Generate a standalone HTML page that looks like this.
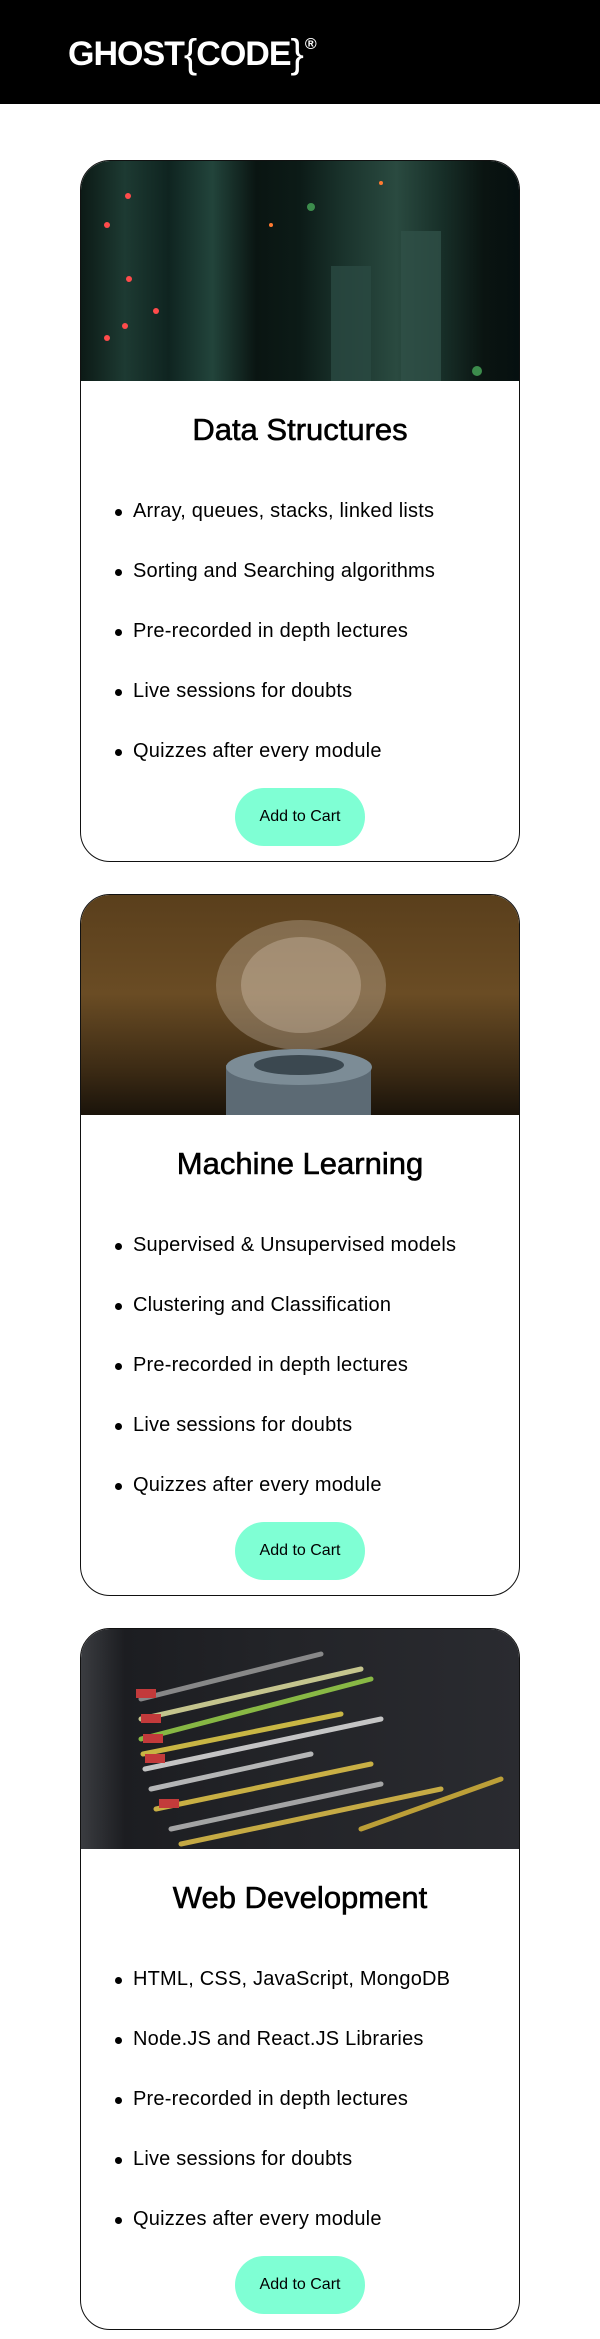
<!DOCTYPE html>
<html><head><meta charset="utf-8"><style>
*{margin:0;padding:0;box-sizing:border-box}
body{width:600px;height:2339px;background:#fff;font-family:"Liberation Sans",sans-serif;position:relative;overflow:hidden}
.hdr{position:absolute;left:0;top:0;width:600px;height:104px;background:#000}
.logo{position:absolute;left:68px;top:30px;color:#fff;font-size:34px;letter-spacing:-1px;font-weight:bold}
.logo .b{font-weight:normal;font-size:40px;position:relative;top:2px}
.logo sup{font-size:16px;vertical-align:top;position:relative;top:6px;margin-left:2px}
.card{position:absolute;left:80px;width:440px;height:702px;border:1.5px solid #111;border-radius:30px;overflow:hidden;background:#fff}
.img{position:absolute;left:0;top:0;width:100%;height:220px;overflow:hidden}
.card h2{position:absolute;top:251px;left:0;width:100%;text-align:center;font-weight:normal;font-size:31px;color:#000;-webkit-text-stroke:0.6px #000}
.card ul{position:absolute;left:52px;top:339px;list-style:none}
.card li{font-size:20px;height:60px;color:#000;position:relative;letter-spacing:0.2px}
.card li:before{content:"";position:absolute;left:-18px;top:9px;width:7px;height:7px;border-radius:50%;background:#000}
.btn{position:absolute;left:154px;top:627px;width:130px;height:58px;border-radius:29px;background:#7fffd4;text-align:center;line-height:58px;font-size:16px;color:#000}
</style></head><body>
<div class="hdr"><div class="logo">GHOST<span class="b">{</span>CODE<span class="b">}</span><sup>®</sup></div></div>

<div class="card" style="top:160px">
<div class="img" style="background:linear-gradient(90deg,#0c1a16 0%,#1d3a32 10%,#0f2420 20%,#22443b 30%,#0a1512 40%,#0c1b17 50%,#1a332c 60%,#2a4a40 72%,#183029 82%,#0a1411 92%,#061010 100%)">
<svg width="440" height="220" style="position:absolute;left:0;top:0">
<g fill="#ff4b4b"><circle cx="26" cy="64" r="3"/><circle cx="47" cy="35" r="3"/><circle cx="75" cy="150" r="3"/><circle cx="48" cy="118" r="3"/><circle cx="26" cy="177" r="3"/><circle cx="44" cy="165" r="3"/></g>
<g fill="#3c8c4c"><circle cx="230" cy="46" r="4"/><circle cx="396" cy="210" r="5"/></g>
<g fill="#ff7a30"><circle cx="190" cy="64" r="2"/><circle cx="300" cy="22" r="2"/></g>
<rect x="250" y="105" width="40" height="115" fill="#2b4a42" opacity=".8"/>
<rect x="320" y="70" width="40" height="150" fill="#2f5047" opacity=".8"/>
</svg></div>
<h2>Data Structures</h2>
<ul><li>Array, queues, stacks, linked lists</li><li>Sorting and Searching algorithms</li><li>Pre-recorded in depth lectures</li><li>Live sessions for doubts</li><li>Quizzes after every module</li></ul>
<div class="btn">Add to Cart</div>
</div>

<div class="card" style="top:894px">
<div class="img" style="background:linear-gradient(180deg,#5a3f1c 0%,#6a4c24 45%,#3b2a14 80%,#1a130a 100%)">
<svg width="440" height="220" style="position:absolute;left:0;top:0">
<ellipse cx="220" cy="90" rx="85" ry="65" fill="#c9b9a8" opacity=".35"/>
<ellipse cx="220" cy="90" rx="60" ry="48" fill="#e8d8c8" opacity=".3"/>
<rect x="145" y="170" width="145" height="50" fill="#5c6a74"/>
<ellipse cx="218" cy="172" rx="73" ry="18" fill="#7c8c96"/>
<ellipse cx="218" cy="170" rx="45" ry="10" fill="#3b4850"/>
</svg></div>
<h2>Machine Learning</h2>
<ul><li>Supervised &amp; Unsupervised models</li><li>Clustering and Classification</li><li>Pre-recorded in depth lectures</li><li>Live sessions for doubts</li><li>Quizzes after every module</li></ul>
<div class="btn">Add to Cart</div>
</div>

<div class="card" style="top:1628px">
<div class="img" style="background:linear-gradient(90deg,#3a3c40 0%,#1c1d21 10%,#222327 40%,#2a2b30 100%)">
<svg width="440" height="220" style="position:absolute;left:0;top:0" opacity=".85">
<g stroke-width="5" stroke-linecap="round">
<path d="M60 70 L240 25" stroke="#9a9a9a"/>
<path d="M60 90 L280 40" stroke="#e1e1a0"/>
<path d="M60 110 L290 50" stroke="#9ad24a"/>
<path d="M62 125 L260 85" stroke="#e6d04a"/>
<path d="M64 140 L300 90" stroke="#e1e1e1"/>
<path d="M70 160 L230 125" stroke="#cfd0d0"/>
<path d="M75 180 L290 135" stroke="#e6c84a"/>
<path d="M90 200 L300 155" stroke="#bbbbbb"/>
<path d="M100 215 L360 160" stroke="#e2c24a"/>
<path d="M280 200 L420 150" stroke="#d6b43a"/>
</g>
<g fill="#e04040"><rect x="55" y="60" width="20" height="9"/><rect x="60" y="85" width="20" height="9"/><rect x="62" y="105" width="20" height="9"/><rect x="64" y="125" width="20" height="9"/><rect x="78" y="170" width="20" height="9"/></g>
</svg></div>
<h2>Web Development</h2>
<ul><li>HTML, CSS, JavaScript, MongoDB</li><li>Node.JS and React.JS Libraries</li><li>Pre-recorded in depth lectures</li><li>Live sessions for doubts</li><li>Quizzes after every module</li></ul>
<div class="btn">Add to Cart</div>
</div>
</body></html>
